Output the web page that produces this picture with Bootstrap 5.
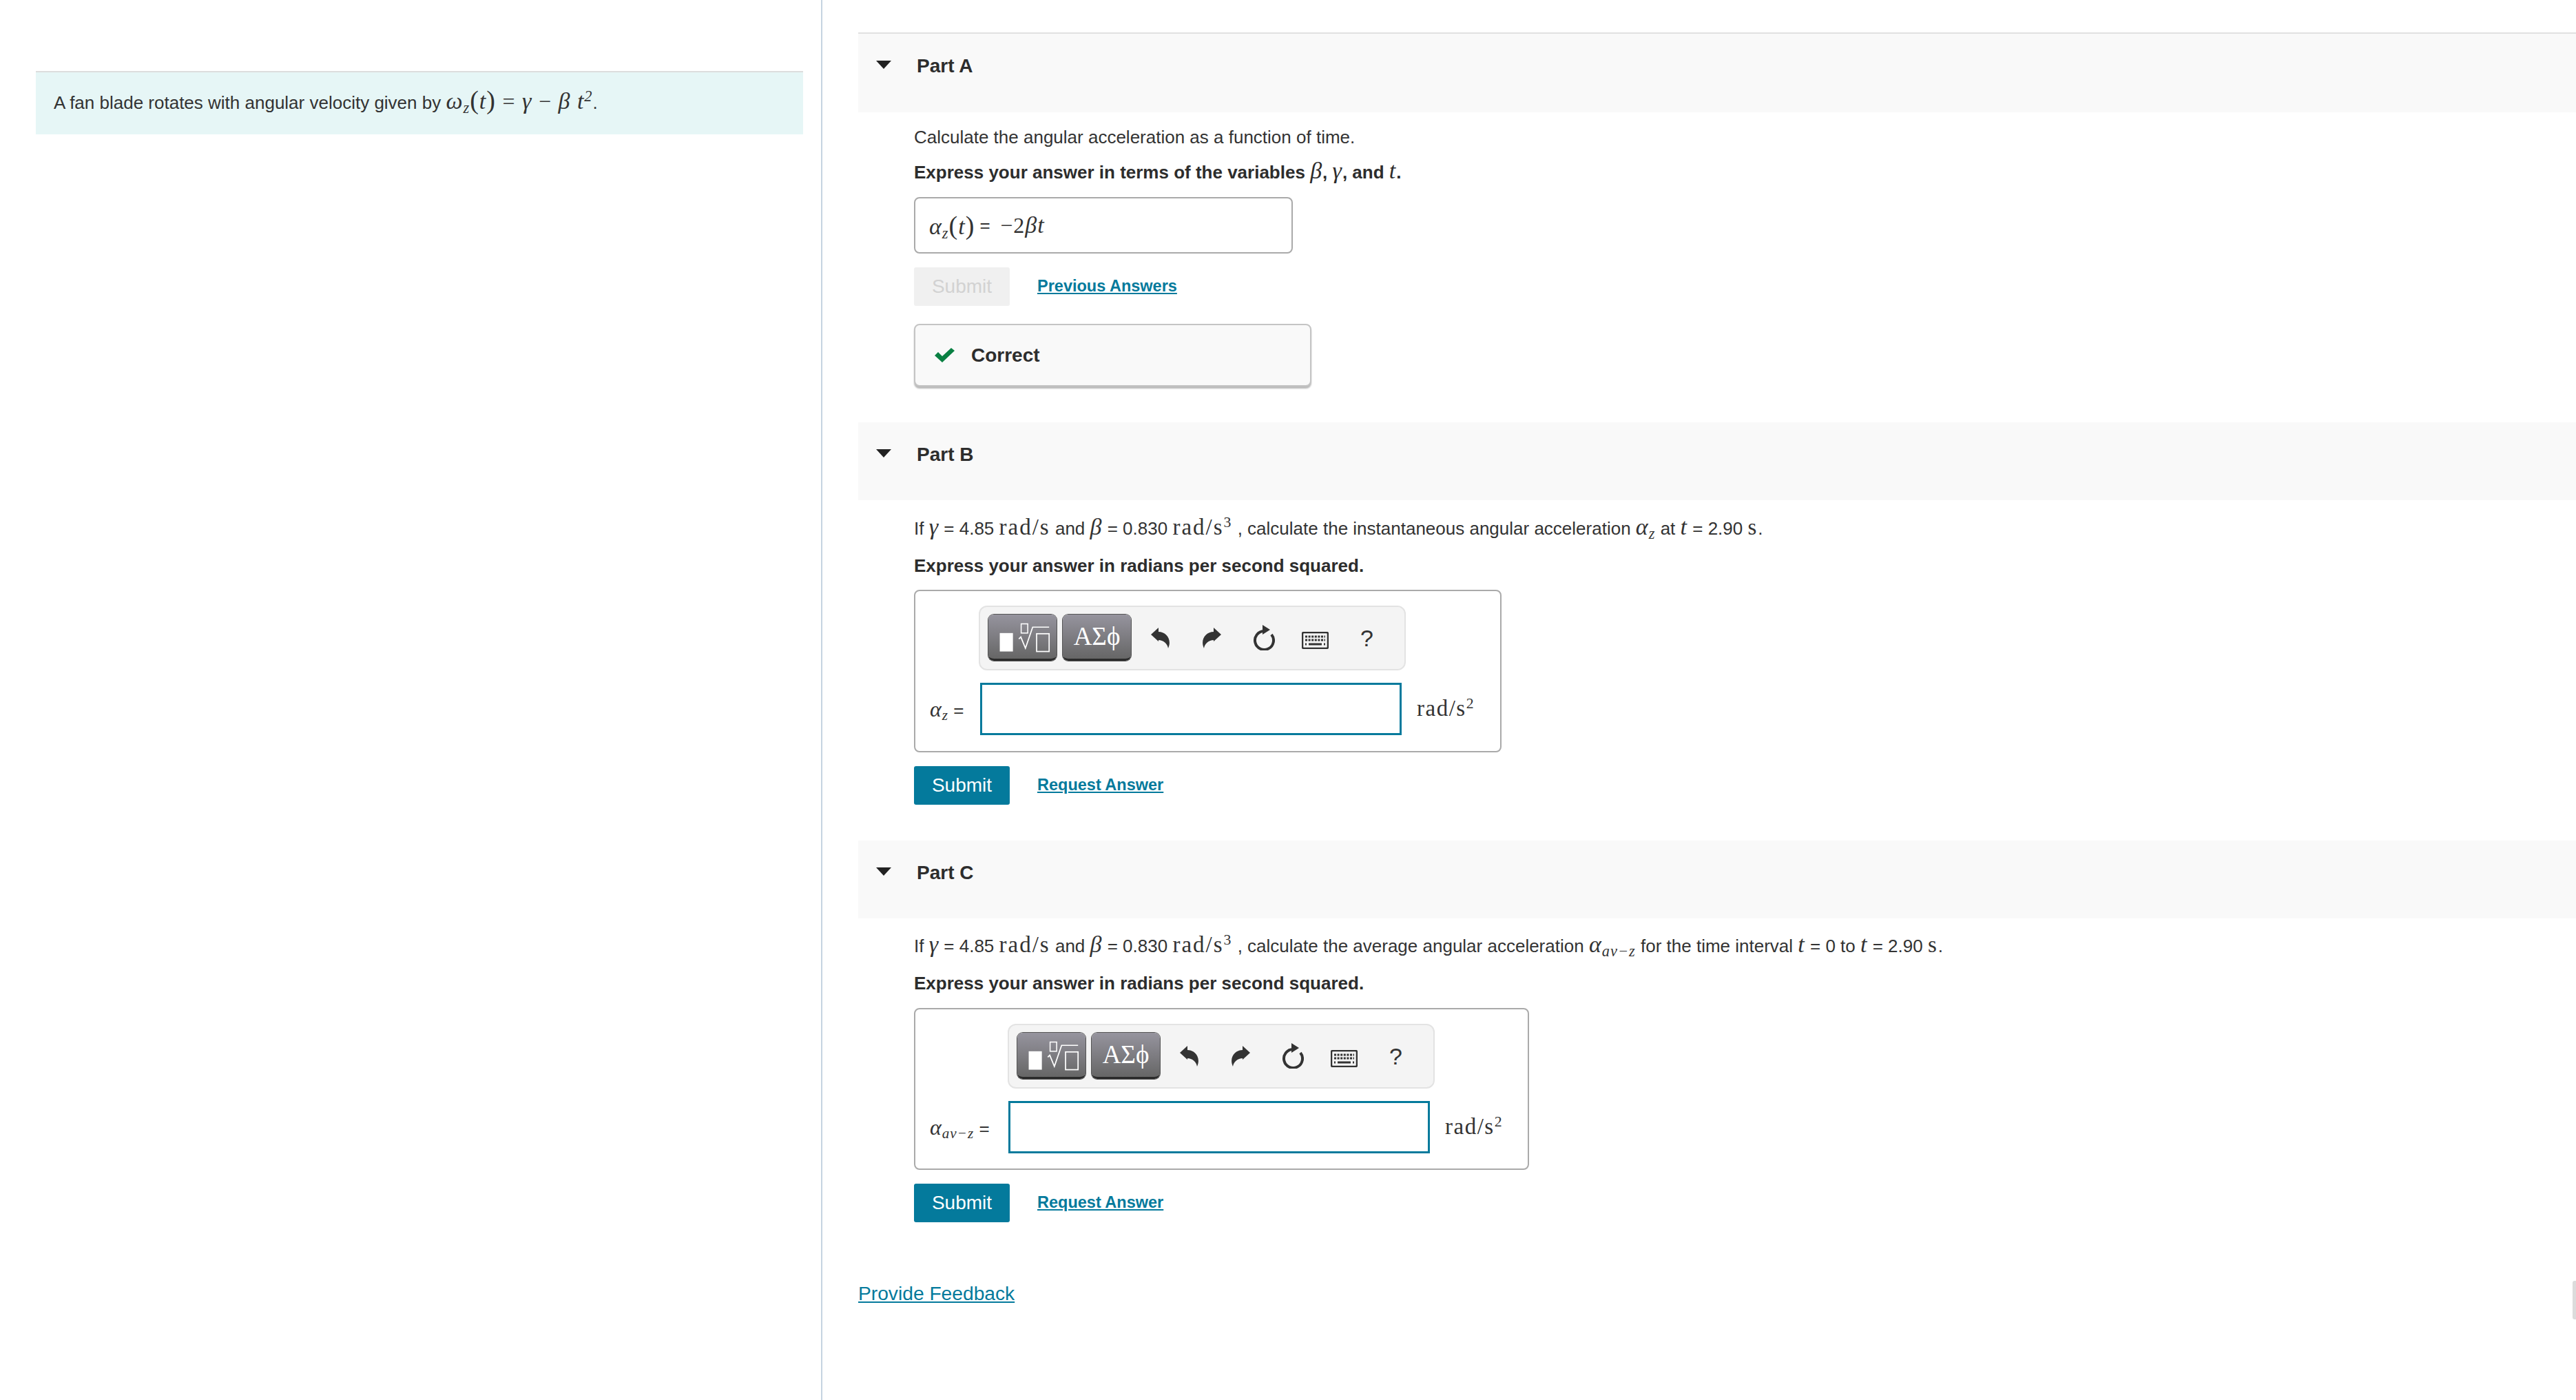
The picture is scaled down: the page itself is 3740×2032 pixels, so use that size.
<!DOCTYPE html>
<html lang="en">
<head>
<meta charset="utf-8">
<title>Part A, B, C</title>
<link rel="stylesheet" href="https://cdn.jsdelivr.net/npm/bootstrap@5.3.0/dist/css/bootstrap.min.css">
<style>
html,body{height:100%;overflow:hidden;background:#fff}
body{font-family:"Liberation Sans",Arial,sans-serif;font-size:26px;line-height:36px;color:#333}
.shell{height:2032px;position:relative}
.left-pane{width:1194px;flex:none;border-right:2px solid #c6d4e1;padding:103px 26px 0 52px}
.intro{background:#e6f6f6;border-top:2px solid #ddd;height:92px;padding:0 26px 7px;display:flex;align-items:center;white-space:nowrap}
.right-pane{flex:1 1 auto;min-width:0;padding:47px 0 0 52px}
.part-head{background:#f9f9f9;height:113px;padding:30px 0 0 26px;font-weight:700;font-size:28px;line-height:34px;color:#2d2d2d;gap:37px}
.part-a .part-head{border-top:2px solid #e1e1e1;height:116px;padding-top:30px}
.caret-ico{width:22px;height:12px;margin-top:9px;flex:none}
.part-body{padding-left:81px}
.q-line{margin:22px 0 0;white-space:nowrap;line-height:36px;height:36px}
.q-bold{margin:19px 0 0;font-weight:700;white-space:nowrap;color:#2d2d2d;line-height:36px;height:36px}
.part-a .q-line{margin-top:18px}
.part-a .q-bold{margin-top:14px}
.part-last .q-line{margin-top:21px}
.mth{font-family:"Liberation Serif",serif;font-style:italic;font-size:34px;letter-spacing:1px;line-height:1}
.mup{font-family:"Liberation Serif",serif;font-style:normal;font-size:33px;letter-spacing:2px;line-height:1}
.mth .mup{font-size:32px;letter-spacing:1px}
.mth sub,.mup sup,.mth sup{font-size:.66em;line-height:0}
.big-p{font-family:"Liberation Serif",serif;font-size:38px;font-style:normal;line-height:1;font-weight:400}
.answer-done{width:550px;height:82px;margin-top:19px;border:2px solid #aaa;border-radius:8px;padding:0 20px;display:flex;align-items:center;white-space:nowrap}
.act-row{margin-top:20px;gap:40px}
.btn-go{width:139px;height:56px;background:#047a9c;border:0;border-radius:3px;color:#fff;font-size:28px;line-height:56px;padding:0}
.btn-go:disabled{background:#f0f0f0;color:#d2d2d2;opacity:1}
.act-link{color:#047a9c;font-weight:700;font-size:23.5px;text-decoration:underline;margin-bottom:2px}
.done-box{width:577px;height:91px;margin-top:26px;background:#f9f9f9;border:2px solid #c4c4c4;border-radius:8px;box-shadow:0 3px 2px #bbb;padding:0 0 0 28px;gap:24px;font-weight:700;font-size:28px;color:#2d2d2d}
.ok-ico{width:29px;height:21px;flex:none}
.part-gap{margin-top:52px}
.part-gap-c{margin-top:52px}
.work-box{border:2px solid #aaa;border-radius:8px;margin-top:17px;padding:21px 0 23px 21px;display:grid;row-gap:18px;align-items:center}
.work-b{width:853px;grid-template-columns:73px 612px 1fr}
.work-c{width:893px;grid-template-columns:114px 612px 1fr;margin-top:18px;padding-bottom:22px}
.tool-strip{grid-column:2;grid-row:1;margin-left:-2px;width:620px;height:94px;background:#f4f4f4;border:2px solid #e3e3e3;border-radius:12px;padding:11px 0 0 12px;display:flex;align-items:flex-start}
.work-c .tool-strip{margin-left:-1px}
.tool-btn{width:99px;height:67px;border:0;border-bottom:3px solid #2b2b2b;border-radius:8px;background:linear-gradient(#96949e,#666);box-shadow:0 0 0 1px #555;padding:0;margin-right:9px;color:#fff;font-family:"Liberation Serif",serif;font-size:37px;line-height:60px;flex:none;overflow:hidden}
.tool-slot{width:75px;height:67px;flex:none;display:flex;align-items:center;justify-content:center;color:#333;font-size:34px}
.first-slot{margin-left:-4px}
.kbd-ico{margin-top:8px}
.field-lbl{grid-column:1;grid-row:2;white-space:nowrap;font-size:26px;padding-top:4px}
.field-lbl .mth{font-size:32px}
.field-box{grid-column:2;grid-row:2;width:612px;height:76px;border:3px solid #047a9c;border-radius:0;background:#fff}
.unit-lbl{grid-column:3;grid-row:2;padding:2px 0 0 22px;white-space:nowrap}
.unit-lbl .mup{letter-spacing:1.5px}
.feedback{display:inline-block;margin-top:85px;font-size:28.2px;color:#047a9c;text-decoration:underline}
.scroll-thumb{position:absolute;right:0;top:1859px;width:5px;height:56px;background:#dcdcdc;border-radius:3px 0 0 3px}
</style>
</head>
<body>
<svg width="0" height="0" class="position-absolute">
  <symbol id="i-caret" viewBox="0 0 22 12"><polygon points="0,0 22,0 11,12" fill="#222"/></symbol>
  <symbol id="i-undo" viewBox="0 0 27 30"><path d="M0 10 11 0V6C22 6 31 17 25 30 24 23 18 18 11 18V20Z" fill="#333"/></symbol>
  <symbol id="i-redo" viewBox="0 0 27 30"><path d="M27 10 16 0V6C5 6-4 17 2 30 3 23 9 18 16 18V20Z" fill="#333"/></symbol>
  <symbol id="i-reload" viewBox="0 0 32 37"><path d="M16 9A13.5 13.5 0 1 0 27 14" fill="none" stroke="#333" stroke-width="4"/><path d="M14 0 25 7 14 14Z" fill="#333"/></symbol>
  <symbol id="i-keys" viewBox="0 0 39 25"><rect x="1" y="1" width="37" height="23" rx="2" fill="#f4f4f4" stroke="#333" stroke-width="2.5"/><path d="M5 7H34M5 12H34" stroke="#333" stroke-width="3" stroke-dasharray="3 1.6"/><path d="M5 18H7M10 18H29M32 18H34" stroke="#333" stroke-width="3"/></symbol>
  <symbol id="i-tpl" viewBox="0 0 99 67"><rect x="15" y="26" width="20" height="28" fill="#fff"/><rect x="47.5" y="12" width="10" height="14" fill="none" stroke="#fff" stroke-width="1.6"/><path d="M44 35 47 32 54 49 65 17H90" fill="none" stroke="#fff" stroke-width="1.8"/><rect x="71" y="27" width="19" height="27" fill="none" stroke="#fff" stroke-width="1.8"/></symbol>
</svg>
<div class="shell d-flex">
  <aside class="left-pane">
    <div class="intro"><span>A fan blade rotates with angular velocity given by&nbsp;<span class="mth">ω<sub>z</sub><span class="big-p">(</span>t<span class="big-p">)</span> <span class="mup">=</span> γ <span class="mup">−</span> β t<sup>2</sup></span>.</span></div>
  </aside>
  <main class="right-pane">
    <section class="part-a">
      <div class="part-head d-flex"><svg class="caret-ico"><use href="#i-caret"/></svg><span>Part A</span></div>
      <div class="part-body">
        <p class="q-line">Calculate the angular acceleration as a function of time.</p>
        <p class="q-bold">Express your answer in terms of the variables <span class="mth fw-normal">β</span>, <span class="mth fw-normal">γ</span>, and <span class="mth fw-normal">t</span>.</p>
        <div class="answer-done"><span class="mth">α<sub>z</sub><span class="big-p">(</span>t<span class="big-p">)</span></span>&nbsp;<span>=</span>&nbsp;&nbsp;<span class="mth"><span class="mup">−2</span>βt</span></div>
        <div class="act-row d-flex align-items-center"><button class="btn-go" disabled>Submit</button><a class="act-link" href="#">Previous Answers</a></div>
        <div class="done-box d-flex align-items-center"><svg class="ok-ico" viewBox="0 0 29 21"><path d="M0 11 5 6 11 12 24 0 29 4 11 21Z" fill="#0a8043"/></svg><span>Correct</span></div>
      </div>
    </section>
    <section class="part-gap">
      <div class="part-head d-flex"><svg class="caret-ico"><use href="#i-caret"/></svg><span>Part B</span></div>
      <div class="part-body">
        <p class="q-line">If <span class="mth">γ</span> = 4.85 <span class="mup">rad/s</span> and <span class="mth">β</span> = 0.830 <span class="mup">rad/s<sup>3</sup></span> , calculate the instantaneous angular acceleration <span class="mth">α<sub>z</sub></span> at <span class="mth">t</span> = 2.90 <span class="mup">s</span>.</p>
        <p class="q-bold">Express your answer in radians per second squared.</p>
        <div class="work-box work-b">
          <div class="tool-strip">
            <button class="tool-btn" aria-label="Templates"><svg width="99" height="64"><use href="#i-tpl"/></svg></button>
            <button class="tool-btn">ΑΣϕ</button>
            <div class="tool-slot first-slot"><svg width="27" height="30"><use href="#i-undo"/></svg></div>
            <div class="tool-slot"><svg width="27" height="30"><use href="#i-redo"/></svg></div>
            <div class="tool-slot"><svg width="32" height="37"><use href="#i-reload"/></svg></div>
            <div class="tool-slot"><svg class="kbd-ico" width="39" height="25"><use href="#i-keys"/></svg></div>
            <div class="tool-slot">?</div>
          </div>
          <div class="field-lbl"><span class="mth">α<sub>z</sub></span> =</div>
          <input class="field-box" type="text" aria-label="alpha z">
          <div class="unit-lbl"><span class="mup">rad/s<sup>2</sup></span></div>
        </div>
        <div class="act-row d-flex align-items-center"><button class="btn-go">Submit</button><a class="act-link" href="#">Request Answer</a></div>
      </div>
    </section>
    <section class="part-gap-c part-last">
      <div class="part-head d-flex"><svg class="caret-ico"><use href="#i-caret"/></svg><span>Part C</span></div>
      <div class="part-body">
        <p class="q-line">If <span class="mth">γ</span> = 4.85 <span class="mup">rad/s</span> and <span class="mth">β</span> = 0.830 <span class="mup">rad/s<sup>3</sup></span> , calculate the average angular acceleration <span class="mth">α<sub>av−z</sub></span> for the time interval <span class="mth">t</span> = 0 to <span class="mth">t</span> = 2.90 <span class="mup">s</span>.</p>
        <p class="q-bold">Express your answer in radians per second squared.</p>
        <div class="work-box work-c">
          <div class="tool-strip">
            <button class="tool-btn" aria-label="Templates"><svg width="99" height="64"><use href="#i-tpl"/></svg></button>
            <button class="tool-btn">ΑΣϕ</button>
            <div class="tool-slot first-slot"><svg width="27" height="30"><use href="#i-undo"/></svg></div>
            <div class="tool-slot"><svg width="27" height="30"><use href="#i-redo"/></svg></div>
            <div class="tool-slot"><svg width="32" height="37"><use href="#i-reload"/></svg></div>
            <div class="tool-slot"><svg class="kbd-ico" width="39" height="25"><use href="#i-keys"/></svg></div>
            <div class="tool-slot">?</div>
          </div>
          <div class="field-lbl"><span class="mth">α<sub>av−z</sub></span> =</div>
          <input class="field-box" type="text" aria-label="alpha av z">
          <div class="unit-lbl"><span class="mup">rad/s<sup>2</sup></span></div>
        </div>
        <div class="act-row d-flex align-items-center"><button class="btn-go">Submit</button><a class="act-link" href="#">Request Answer</a></div>
      </div>
      <a class="feedback" href="#">Provide Feedback</a>
    </section>
  </main>
  <div class="scroll-thumb"></div>
</div>
<script src="https://cdn.jsdelivr.net/npm/bootstrap@5.3.0/dist/js/bootstrap.bundle.min.js"></script>
</body>
</html>
